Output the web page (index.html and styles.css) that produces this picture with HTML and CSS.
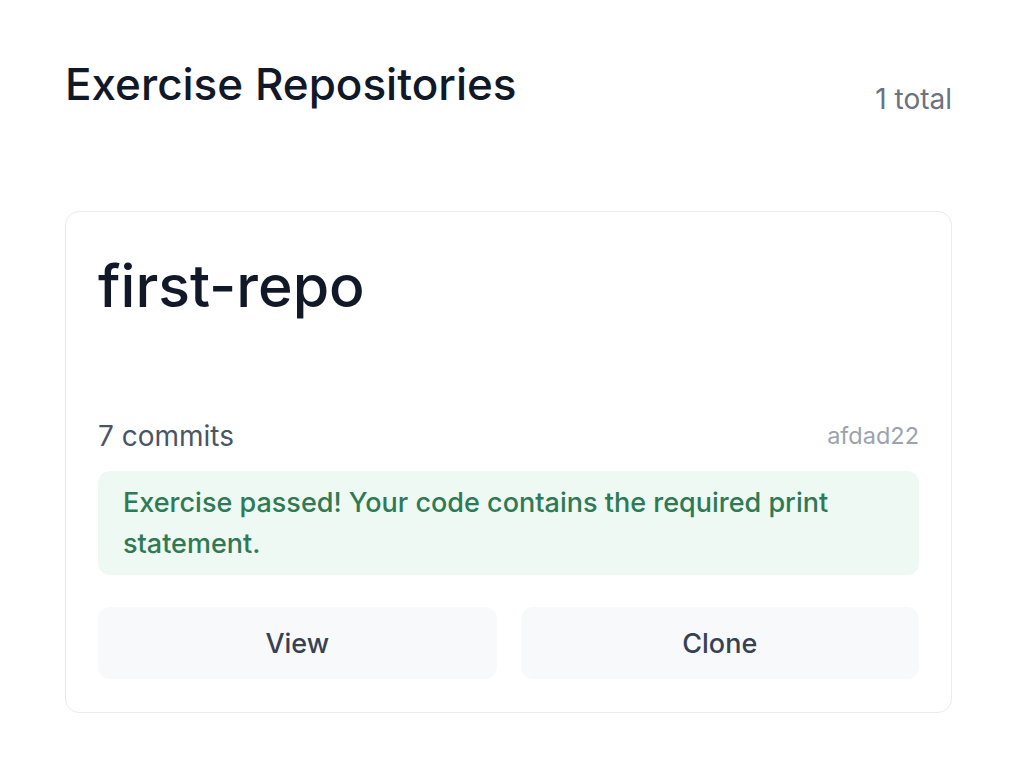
FILE: index.html
```html
<!DOCTYPE html>
<html>
<head>
<meta charset="utf-8">
<link rel="stylesheet" href="styles.css">
</head>
<body>
<main class="page">
  <header class="header">
    <h1 class="title">Exercise Repositories</h1>
    <span class="count">1 total</span>
  </header>
  <section class="card">
    <h2 class="repo-name">first-repo</h2>
    <div class="meta">
      <span class="commits">7 commits</span>
      <span class="hash">afdad22</span>
    </div>
    <div class="status">Exercise passed! Your code contains the required print statement.</div>
    <div class="actions">
      <button class="btn">View</button>
      <button class="btn">Clone</button>
    </div>
  </section>
</main>
</body>
</html>
```
FILE: styles.css
```css
* { box-sizing: border-box; }
html, body { margin: 0; background: #ffffff; }
body {
  font-family: Inter, "Noto Sans", sans-serif;
  color: #111827;
}
.page {
  padding: 58px 66px 0 65px;
}
.header {
  display: flex;
  justify-content: space-between;
  align-items: flex-start;
}
.title {
  margin: 0;
  font-size: 44px;
  font-weight: 500;
  line-height: 52px;
  color: #111827;
}
.count {
  margin-top: 25px;
  font-size: 28px;
  color: #6b7280;
  line-height: 32px;
}
.card {
  margin-top: 96px;
  border: 1px solid #ebebeb;
  border-radius: 14px;
  padding: 32px 32px 33px;
}
.repo-name {
  margin: 0;
  font-size: 59px;
  font-weight: 500;
  line-height: 84px;
  color: #111827;
}
.meta {
  margin-top: 90px;
  display: flex;
  justify-content: space-between;
  align-items: center;
  line-height: 36px;
}
.commits { font-size: 28px; color: #4b5563; }
.hash { font-size: 23.5px; color: #9ca3af; }
.status {
  margin-top: 17px;
  background: #edf9f2;
  color: #2f7a55;
  border-radius: 12px;
  padding: 11px 25px;
  font-size: 27px;
  font-weight: 500;
  line-height: 41px;
}
.actions {
  margin-top: 32px;
  display: grid;
  grid-template-columns: 1fr 1fr;
  gap: 24px;
}
.btn {
  height: 72px;
  border: none;
  border-radius: 12px;
  background: #f8f9fa;
  color: #374151;
  font-family: Inter, "Noto Sans", sans-serif;
  font-size: 27px;
  font-weight: 500;
  padding: 0;
}
```
